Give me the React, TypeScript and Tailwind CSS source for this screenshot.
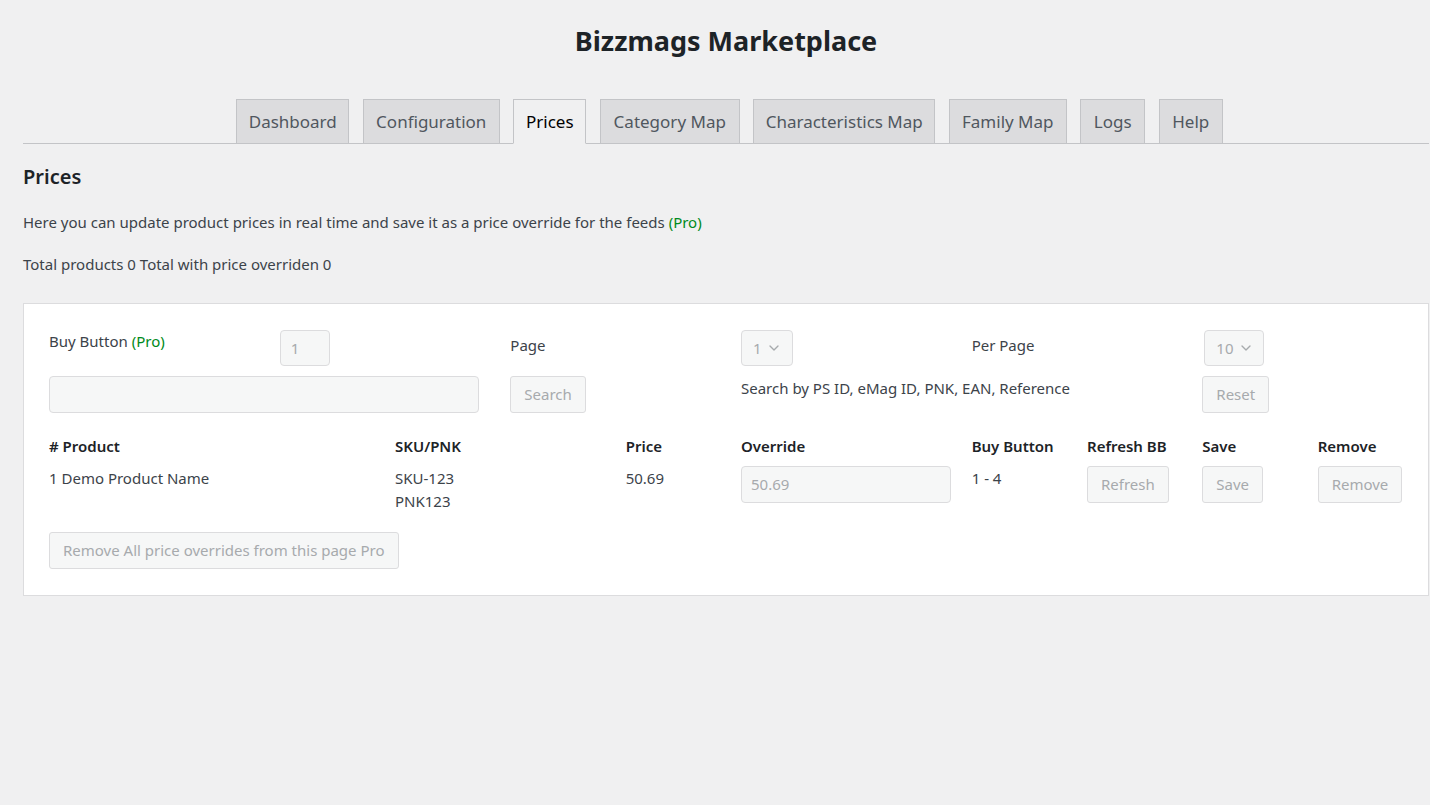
import { ChevronDown } from "lucide-react"

const tabs = [
  { label: "Dashboard", w: "w-[113px]" },
  { label: "Configuration", w: "w-[137px]" },
  { label: "Prices", w: "w-[73px]", active: true },
  { label: "Category Map", w: "w-[140px]" },
  { label: "Characteristics Map", w: "w-[182px]" },
  { label: "Family Map", w: "w-[118px]" },
  { label: "Logs", w: "w-[65px]" },
  { label: "Help", w: "w-[64px]" },
]

const btn =
  "h-[37px] rounded-[3px] border border-[#dcdcde] bg-[#f6f7f7] px-[13px] text-[15px] text-[#a7aaad]"

function FakeSelect({ value, w }: { value: string; w: string }) {
  return (
    <div
      className={`${w} flex h-[36px] items-center gap-[4px] rounded-[4px] border border-[#dcdcde] bg-[#f6f7f7] pl-[11px] text-[15px] text-[#a7aaad]`}
    >
      {value}
      <ChevronDown className="h-[16px] w-[16px]" strokeWidth={2} />
    </div>
  )
}

export default function App() {
  return (
    <div className="min-h-screen bg-[#f0f0f1] pl-[23px] pr-px font-['Segoe_UI','Noto_Sans',sans-serif] text-[15px] leading-[23px] text-[#3c434a]">
      <h1 className="pt-[22px] text-center text-[27px] font-bold leading-[38px] text-[#1d2327]">
        Bizzmags Marketplace
      </h1>

      <nav className="mt-[39px] flex justify-center gap-[13.5px] border-b border-[#c3c4c7] pl-[7px]">
        {tabs.map((t) => (
          <div
            key={t.label}
            className={`${t.w} -mb-px flex h-[45px] items-center justify-center border border-[#c3c4c7] text-[17px] ${
              t.active
                ? "border-b-[#f0f0f1] bg-[#f0f0f1] text-black"
                : "bg-[#dcdcde] text-[#50575e]"
            }`}
          >
            {t.label}
          </div>
        ))}
      </nav>

      <h2 className="mt-[20px] text-[20px] font-semibold leading-[26px] text-[#1d2327]">Prices</h2>
      <p className="mt-[21px] leading-[22px]">
        Here you can update product prices in real time and save it as a price override for the feeds{" "}
        <span className="text-[#008a20]">(Pro)</span>
      </p>
      <p className="mt-[20px] leading-[22px]">Total products 0 Total with price overriden 0</p>

      <div className="mt-[28px] border border-[#dcdcde] bg-white px-[25px] pb-[26px] pt-[26px]">
        <div className="grid grid-cols-12 gap-x-[30px]">
          <div className="col-span-2 leading-[22px]">
            Buy Button <span className="text-[#008a20]">(Pro)</span>
          </div>
          <div className="col-span-2">
            <div className="flex h-[36px] w-[50px] items-center rounded-[4px] border border-[#dcdcde] bg-[#f6f7f7] pl-[10px] text-[#a7aaad]">
              1
            </div>
          </div>
          <div className="col-span-2 pt-[4px] leading-[22px]">Page</div>
          <div className="col-span-2">
            <FakeSelect value="1" w="w-[52px]" />
          </div>
          <div className="col-span-2 pt-[4px] leading-[22px]">Per Page</div>
          <div className="col-span-2 pl-[2px]">
            <FakeSelect value="10" w="w-[60px]" />
          </div>
        </div>

        <div className="mt-[10px] grid grid-cols-12 gap-x-[30px]">
          <div className="col-span-4">
            <div className="h-[37px] w-[430px] rounded-[4px] border border-[#dcdcde] bg-[#f6f7f7]" />
          </div>
          <div className="col-span-2">
            <button className={btn}>Search</button>
          </div>
          <div className="col-span-4 pt-px leading-[22px]">Search by PS ID, eMag ID, PNK, EAN, Reference</div>
          <div className="col-span-2">
            <button className={btn}>Reset</button>
          </div>
        </div>

        <div className="mt-[22px] grid grid-cols-12 gap-x-[30px] font-semibold leading-[22px] text-[#1d2327]">
          <div className="col-span-3"># Product</div>
          <div className="col-span-2">SKU/PNK</div>
          <div>Price</div>
          <div className="col-span-2">Override</div>
          <div>Buy Button</div>
          <div>Refresh BB</div>
          <div>Save</div>
          <div>Remove</div>
        </div>

        <div className="mt-[9px] grid grid-cols-12 gap-x-[30px]">
          <div className="col-span-3 pt-px">1 Demo Product Name</div>
          <div className="col-span-2 pt-px">
            SKU-123
            <br />
            PNK123
          </div>
          <div className="pt-px">50.69</div>
          <div className="col-span-2">
            <div className="flex h-[37px] w-[210px] items-center rounded-[4px] border border-[#dcdcde] bg-[#f6f7f7] pl-[9px] text-[#a7aaad]">
              50.69
            </div>
          </div>
          <div className="pt-px">1 - 4</div>
          <div>
            <button className={btn}>Refresh</button>
          </div>
          <div>
            <button className={btn}>Save</button>
          </div>
          <div>
            <button className={btn}>Remove</button>
          </div>
        </div>

        <button className={`${btn} mt-[19px] h-[36px]`}>Remove All price overrides from this page Pro</button>
      </div>
    </div>
  )
}
